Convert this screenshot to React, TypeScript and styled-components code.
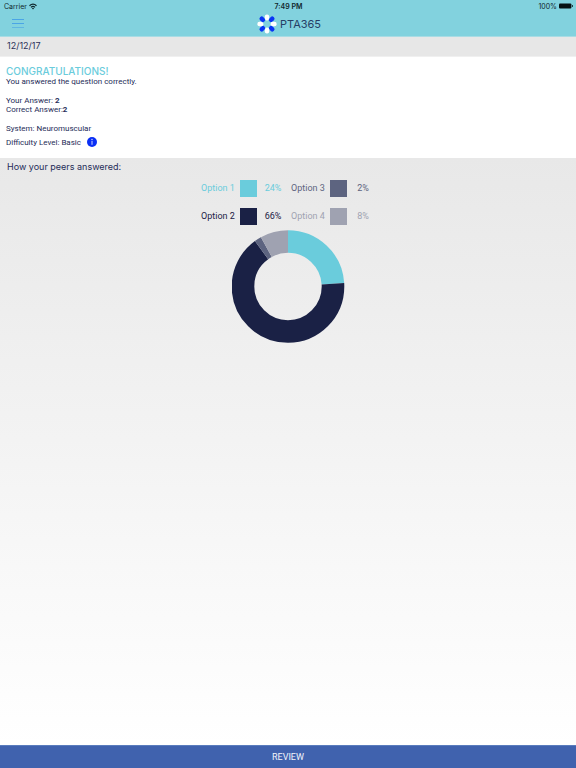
import React from "react";
import styled, { createGlobalStyle } from "styled-components";

const GlobalStyle = createGlobalStyle`
  * { box-sizing: border-box; }
  body { margin: 0; }
  button { font: inherit; border: 0; padding: 0; cursor: pointer; }
`;

const Screen = styled.div`
  min-height: 100vh;
  display: flex;
  flex-direction: column;
  font-family: Roboto, "Liberation Sans", sans-serif;
  font-size: 8px;
  line-height: 9px;
  color: #252c58;
  background: #ffffff;
`;

const Header = styled.header`
  height: 37px;
  background: #82d2de;
  border-bottom: 1px solid #a9dce4;
`;

const StatusBar = styled.div`
  display: grid;
  grid-template-columns: 1fr auto 1fr;
  align-items: center;
  height: 12px;
  padding: 0 3px 0 4px;
  font-family: Inter, sans-serif;
  font-size: 7px;
  color: #10272c;
`;

const StatusGroup = styled.span<{ $end?: boolean }>`
  display: flex;
  align-items: center;
  justify-content: ${(p) => (p.$end ? "flex-end" : "flex-start")};
  gap: 2px;
`;

const Clock = styled.span`
  font-weight: 600;
`;

const NavBar = styled.div`
  display: grid;
  grid-template-columns: 1fr auto 1fr;
  align-items: center;
  height: 24px;
  padding: 0 12px;
`;

const MenuButton = styled.button`
  display: flex;
  width: 12px;
  height: 12px;
  background: none;
`;

const Brand = styled.div`
  display: flex;
  align-items: center;
  gap: 3px;
  padding-left: 2px;
  font-family: Inter, sans-serif;
  font-size: 11px;
  line-height: 20px;
  color: #263f66;
`;

const DateBar = styled.div`
  height: 20px;
  padding: 0 7px;
  border-bottom: 1px solid #f0f0f0;
  background: #e7e7e7;
  font-family: Inter, sans-serif;
  font-size: 9px;
  line-height: 17px;
  color: #2b3157;
`;

const Result = styled.section`
  height: 101px;
  padding: 8px 6px 0;
  background: #ffffff;
`;

const Congrats = styled.h1`
  margin: 0;
  font-family: Inter, sans-serif;
  font-size: 10px;
  line-height: 12px;
  font-weight: 500;
  color: #6accdc;
`;

const Line = styled.p<{ $gap?: boolean }>`
  margin: ${(p) => (p.$gap ? "10px" : "0")} 0 0;
`;

const Difficulty = styled.div`
  display: flex;
  align-items: center;
  gap: 6px;
  margin-top: 4px;
`;

const InfoButton = styled.button`
  display: flex;
  width: 10px;
  height: 10px;
  background: none;
`;

const Peers = styled.section`
  flex: 1;
  display: flex;
  flex-direction: column;
  background: linear-gradient(#e8e8e8, #ffffff);
`;

const PeersTitle = styled.h2`
  margin: 0;
  padding: 0 7px;
  font-family: Inter, sans-serif;
  font-size: 9px;
  line-height: 18px;
  font-weight: 400;
`;

const Legend = styled.ul`
  list-style: none;
  align-self: center;
  display: grid;
  grid-template-columns: auto auto;
  gap: 11px 2px;
  margin: 4px 0 0;
  padding: 0 0 0 4px;
  font-size: 9px;
`;

const LegendItem = styled.li<{ $color: string }>`
  display: grid;
  grid-template-columns: 39px 17px 32px;
  align-items: center;
  color: ${(p) => p.$color};
`;

const Swatch = styled.span<{ $color: string }>`
  height: 17px;
  background: ${(p) => p.$color};
`;

const Percent = styled.span`
  text-align: center;
`;

const Donut = styled.svg`
  align-self: center;
  display: block;
  width: 113px;
  height: 113px;
  margin-top: 5px;
`;

const ReviewButton = styled.button`
  height: 23px;
  border-top: 1px solid #5a7cbd;
  background: #4062ae;
  color: #f2f5fb;
  font-size: 9px;
`;

const options = [
  { label: "Option 1", share: 24, color: "#6accdc" },
  { label: "Option 2", share: 66, color: "#1a2145" },
  { label: "Option 3", share: 2, color: "#5d6480" },
  { label: "Option 4", share: 8, color: "#9fa2b1" },
];

const legendOrder = [0, 2, 1, 3];

const slices = options.map((option, i) => ({
  ...option,
  start: options.slice(0, i).reduce((sum, o) => sum + o.share, 0),
}));

const WifiIcon = () => (
  <svg width="8" height="7" viewBox="0 0 16 13" fill="none" stroke="#10272c" strokeWidth="2.6" aria-hidden="true">
    <path d="M1 5 Q8 -1.6 15 5" />
    <path d="M4 8.2 Q8 4.4 12 8.2" />
    <path d="M5.8 10 Q8 8.2 10.2 10 L8 12.4Z" fill="#10272c" stroke="none" />
  </svg>
);

const BatteryIcon = () => (
  <svg width="14" height="6" viewBox="0 0 14 6" aria-hidden="true">
    <rect x="0" y="0.5" width="12.4" height="5" rx="1" fill="#071214" />
    <path d="M13 2 Q14 2.2 14 3 Q14 3.8 13 4Z" fill="#071214" />
  </svg>
);

const LogoIcon = () => (
  <svg width="20" height="20" viewBox="-10 -10 20 20" aria-hidden="true">
    {[0, 45, 90, 135, 180, 225, 270, 315].map((angle) => (
      <rect
        key={angle}
        x="-2.2"
        y="-9.6"
        width="4.4"
        height="6"
        rx="2"
        fill={angle % 90 === 0 ? "#ffffff" : "#0a35f5"}
        transform={`rotate(${angle})`}
      />
    ))}
  </svg>
);

const MenuIcon = () => (
  <svg width="12" height="12" viewBox="0 0 12 12" stroke="#4aa5e6" strokeWidth="1" aria-hidden="true">
    <path d="M0 1.5H12M0 5.5H12" />
    <path d="M0 9.5H12" opacity="0.6" />
  </svg>
);

const InfoIcon = () => (
  <svg width="10" height="10" viewBox="0 0 10 10" aria-hidden="true">
    <circle cx="5" cy="5" r="5" fill="#0a2ff5" />
    <circle cx="5" cy="2.4" r="0.6" fill="#ffffff" />
    <path d="M5 3.8V7.8" stroke="#ffffff" strokeWidth="0.8" />
  </svg>
);

export default function App() {
  return (
    <Screen>
      <GlobalStyle />
      <Header>
        <StatusBar>
          <StatusGroup>
            Carrier
            <WifiIcon />
          </StatusGroup>
          <Clock>7:49 PM</Clock>
          <StatusGroup $end>
            100%
            <BatteryIcon />
          </StatusGroup>
        </StatusBar>
        <NavBar>
          <MenuButton type="button" aria-label="Menu">
            <MenuIcon />
          </MenuButton>
          <Brand>
            <LogoIcon />
            PTA365
          </Brand>
        </NavBar>
      </Header>
      <DateBar>12/12/17</DateBar>
      <Result>
        <Congrats>CONGRATULATIONS!</Congrats>
        <Line>You answered the question correctly.</Line>
        <Line $gap>
          Your Answer: <b>2</b>
        </Line>
        <Line>
          Correct Answer:<b>2</b>
        </Line>
        <Line $gap>System: Neuromuscular</Line>
        <Difficulty>
          Difficulty Level: Basic
          <InfoButton type="button" aria-label="About difficulty levels">
            <InfoIcon />
          </InfoButton>
        </Difficulty>
      </Result>
      <Peers>
        <PeersTitle>How your peers answered:</PeersTitle>
        <Legend>
          {legendOrder.map((i) => (
            <LegendItem key={options[i].label} $color={options[i].color}>
              <span>{options[i].label}</span>
              <Swatch $color={options[i].color} />
              <Percent>{options[i].share}%</Percent>
            </LegendItem>
          ))}
        </Legend>
        <Donut viewBox="0 0 113 113" role="img" aria-label="Share of peers per option">
          {slices.map((slice) => (
            <circle
              key={slice.label}
              cx="56"
              cy="56.5"
              r="45"
              fill="none"
              stroke={slice.color}
              strokeWidth="22.6"
              pathLength={100}
              strokeDasharray={`${slice.share} ${100 - slice.share}`}
              strokeDashoffset={-slice.start}
              transform="rotate(-90 56 56.5)"
            />
          ))}
        </Donut>
      </Peers>
      <ReviewButton type="button">REVIEW</ReviewButton>
    </Screen>
  );
}
